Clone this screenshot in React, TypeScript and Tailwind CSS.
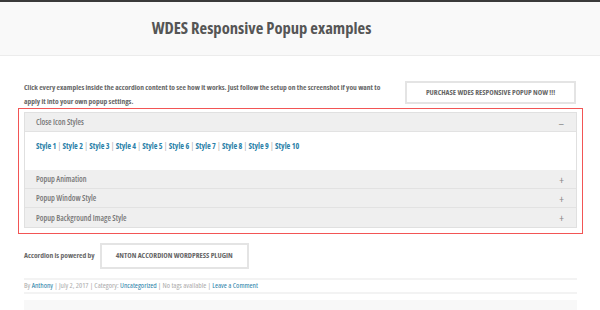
import React from "react";

function Row({ title, open, last }: { title: string; open?: boolean; last?: boolean }) {
  return (
    <div
      className={`flex h-[19px] items-center justify-between bg-[#efefef] pl-[11px] pr-[12px] ${last ? "" : "border-b border-[#e2e2e2]"}`}
    >
      <span className="text-[8px] font-semibold text-[#777]">{title}</span>
      <span className="text-[11px] leading-none text-[#888]">{open ? "–" : "+"}</span>
    </div>
  );
}

export default function App() {
  const styles = Array.from({ length: 10 }, (_, i) => `Style ${i + 1}`);
  return (
    <div className="h-[310px] w-[600px] overflow-hidden bg-white font-['Open_Sans',sans-serif] font-stretch-condensed">
      <div className="h-[2px] bg-[#3a3a3a]" />
      <div className="flex h-[54px] items-center justify-center border-b border-[#ececec] bg-[#f9f9f9]">
        <h1 className="pr-[77px] text-[16.6px] font-bold text-[#555]">WDES Responsive Popup examples</h1>
      </div>
      <div className="pl-[24px] pr-[23px]">
        <div className="mt-[24px] flex items-start justify-between">
          <p className="w-[372px] text-[7.5px] font-bold leading-[14px] text-[#666]">
            Click every examples inside the accordion content to see how it works. Just follow the setup on the screenshot if you want to apply it into your own popup settings.
          </p>
          <div className="mr-[1px] mt-[1px] flex h-[23px] w-[171px] items-center justify-center border-2 border-[#e4e4e4] text-[7.5px] font-bold text-[#666]">
            PURCHASE WDES RESPONSIVE POPUP NOW !!!
          </div>
        </div>
        <div className="-mx-[6px] border-[1.5px] border-[#f25555] px-[5px] pb-[5px] pt-[3px]">
          <div className="border border-[#e0e0e0]">
            <Row title="Close Icon Styles" open />
            <div className="h-[38px] bg-white pl-[11px] pt-[8px] text-[8px] font-bold text-[#2a7fa8]">
              {styles.map((s, i) => (
                <React.Fragment key={s}>
                  {i > 0 && <span className="font-normal text-[#aaa]"> | </span>}
                  <span>{s}</span>
                </React.Fragment>
              ))}
            </div>
            <Row title="Popup Animation" />
            <Row title="Popup Window Style" />
            <Row title="Popup Background Image Style" last />
          </div>
        </div>
        <div className="mt-[9px] flex items-center">
          <span className="text-[7.5px] font-bold text-[#666]">Accordion is powered by</span>
          <div className="ml-[5px] flex h-[26px] w-[149px] items-center justify-center border-2 border-[#e4e4e4] text-[7.5px] font-bold text-[#666]">
            4NTON ACCORDION WORDPRESS PLUGIN
          </div>
        </div>
        <div className="mt-[9px] flex h-[16px] items-center border-y-2 border-[#f3f3f3] text-[7.5px] text-[#aaa]">
          <span>
            By <span className="text-[#2a7fa8]">Anthony</span> | July 2, 2017 | Category:{" "}
            <span className="text-[#2a7fa8]">Uncategorized</span> | No tags available |{" "}
            <span className="text-[#2a7fa8]">Leave a Comment</span>
          </span>
        </div>
        <div className="mt-[6px] h-[20px] bg-[#f8f8f8]" />
      </div>
    </div>
  );
}
